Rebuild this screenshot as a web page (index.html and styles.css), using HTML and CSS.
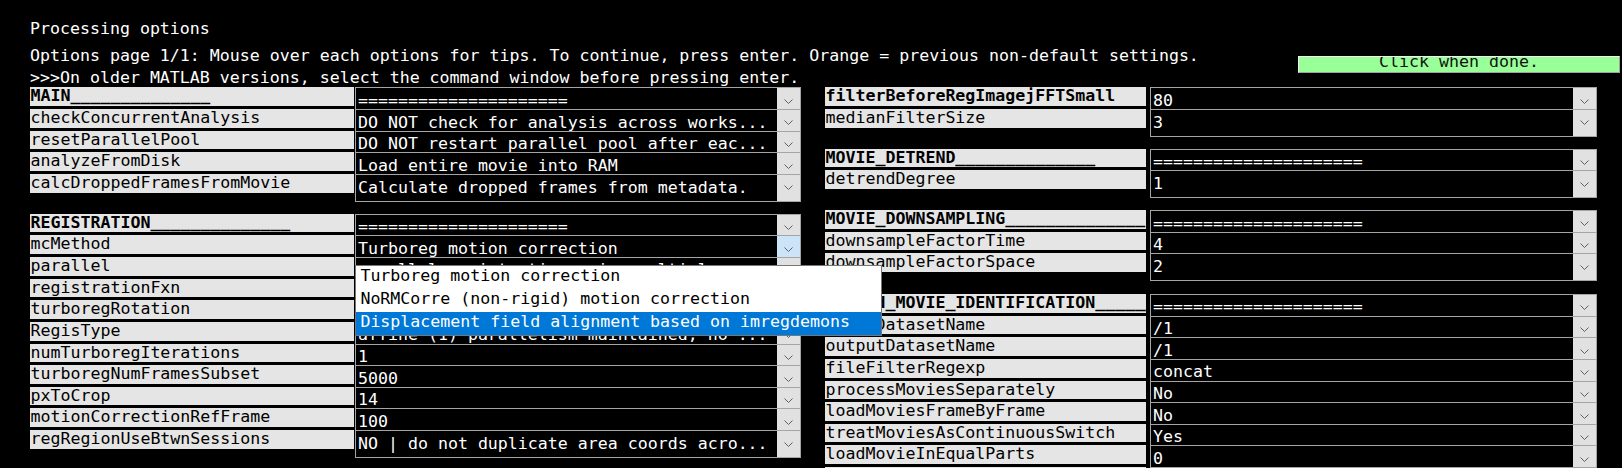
FILE: index.html
```html
<!DOCTYPE html>
<html>
<head>
<meta charset="utf-8">
<title>Processing options</title>
<link rel="stylesheet" href="styles.css">
</head>
<body>
<div class="top">
  <div class="msgs">
    <div class="title">Processing options</div>
    <div class="line l2">Options page 1/1: Mouse over each options for tips. To continue, press enter. Orange = previous non-default settings.</div>
    <div class="line l3">&gt;&gt;&gt;On older MATLAB versions, select the command window before pressing enter.</div>
  </div>
  <div class="done">Click when done.</div>
</div>
<div class="cols">
  <div class="col left">
    <div class="group">
      <div class="row"><div class="label hdr">MAIN______________</div><div class="val"><span class="vt">=====================</span><span class="arrow"><svg width="9" height="5" viewBox="0 0 9 5"><polyline points="0.5,0.5 4.5,4.5 8.5,0.5"/></svg></span></div></div>
      <div class="row"><div class="label">checkConcurrentAnalysis</div><div class="val"><span class="vt">DO NOT check for analysis across works...</span><span class="arrow"><svg width="9" height="5" viewBox="0 0 9 5"><polyline points="0.5,0.5 4.5,4.5 8.5,0.5"/></svg></span></div></div>
      <div class="row"><div class="label">resetParallelPool</div><div class="val"><span class="vt">DO NOT restart parallel pool after eac...</span><span class="arrow"><svg width="9" height="5" viewBox="0 0 9 5"><polyline points="0.5,0.5 4.5,4.5 8.5,0.5"/></svg></span></div></div>
      <div class="row"><div class="label">analyzeFromDisk</div><div class="val"><span class="vt">Load entire movie into RAM</span><span class="arrow"><svg width="9" height="5" viewBox="0 0 9 5"><polyline points="0.5,0.5 4.5,4.5 8.5,0.5"/></svg></span></div></div>
      <div class="row"><div class="label">calcDroppedFramesFromMovie</div><div class="val"><span class="vt">Calculate dropped frames from metadata.</span><span class="arrow"><svg width="9" height="5" viewBox="0 0 9 5"><polyline points="0.5,0.5 4.5,4.5 8.5,0.5"/></svg></span></div></div>
    </div>
    <div class="group">
      <div class="row"><div class="label hdr">REGISTRATION______________</div><div class="val"><span class="vt">=====================</span><span class="arrow"><svg width="9" height="5" viewBox="0 0 9 5"><polyline points="0.5,0.5 4.5,4.5 8.5,0.5"/></svg></span></div></div>
      <div class="row"><div class="label">mcMethod</div><div class="val open"><span class="vt">Turboreg motion correction</span><span class="arrow"><svg width="9" height="5" viewBox="0 0 9 5"><polyline points="0.5,0.5 4.5,4.5 8.5,0.5"/></svg></span>
        <div class="menu">
          <div class="mi">Turboreg motion correction</div>
          <div class="mi">NoRMCorre (non-rigid) motion correction</div>
          <div class="mi sel">Displacement field alignment based on imregdemons</div>
        </div>
      </div></div>
      <div class="row"><div class="label">parallel</div><div class="val"><span class="vt">parallel registration using multiple c...</span><span class="arrow"><svg width="9" height="5" viewBox="0 0 9 5"><polyline points="0.5,0.5 4.5,4.5 8.5,0.5"/></svg></span></div></div>
      <div class="row"><div class="label">registrationFxn</div><div class="val"><span class="vt">transfturboreg</span><span class="arrow"><svg width="9" height="5" viewBox="0 0 9 5"><polyline points="0.5,0.5 4.5,4.5 8.5,0.5"/></svg></span></div></div>
      <div class="row"><div class="label">turboregRotation</div><div class="val"><span class="vt">DO NOT use rotation correction</span><span class="arrow"><svg width="9" height="5" viewBox="0 0 9 5"><polyline points="0.5,0.5 4.5,4.5 8.5,0.5"/></svg></span></div></div>
      <div class="row"><div class="label">RegisType</div><div class="val"><span class="vt">affine (1) parallelism maintained, no ...</span><span class="arrow"><svg width="9" height="5" viewBox="0 0 9 5"><polyline points="0.5,0.5 4.5,4.5 8.5,0.5"/></svg></span></div></div>
      <div class="row"><div class="label">numTurboregIterations</div><div class="val"><span class="vt">1</span><span class="arrow"><svg width="9" height="5" viewBox="0 0 9 5"><polyline points="0.5,0.5 4.5,4.5 8.5,0.5"/></svg></span></div></div>
      <div class="row"><div class="label">turboregNumFramesSubset</div><div class="val"><span class="vt">5000</span><span class="arrow"><svg width="9" height="5" viewBox="0 0 9 5"><polyline points="0.5,0.5 4.5,4.5 8.5,0.5"/></svg></span></div></div>
      <div class="row"><div class="label">pxToCrop</div><div class="val"><span class="vt">14</span><span class="arrow"><svg width="9" height="5" viewBox="0 0 9 5"><polyline points="0.5,0.5 4.5,4.5 8.5,0.5"/></svg></span></div></div>
      <div class="row"><div class="label">motionCorrectionRefFrame</div><div class="val"><span class="vt">100</span><span class="arrow"><svg width="9" height="5" viewBox="0 0 9 5"><polyline points="0.5,0.5 4.5,4.5 8.5,0.5"/></svg></span></div></div>
      <div class="row"><div class="label">regRegionUseBtwnSessions</div><div class="val"><span class="vt">NO | do not duplicate area coords acro...</span><span class="arrow"><svg width="9" height="5" viewBox="0 0 9 5"><polyline points="0.5,0.5 4.5,4.5 8.5,0.5"/></svg></span></div></div>
    </div>
  </div>
  <div class="col right">
    <div class="group">
      <div class="row"><div class="label hdr">filterBeforeRegImagejFFTSmall</div><div class="val"><span class="vt">80</span><span class="arrow"><svg width="9" height="5" viewBox="0 0 9 5"><polyline points="0.5,0.5 4.5,4.5 8.5,0.5"/></svg></span></div></div>
      <div class="row"><div class="label">medianFilterSize</div><div class="val"><span class="vt">3</span><span class="arrow"><svg width="9" height="5" viewBox="0 0 9 5"><polyline points="0.5,0.5 4.5,4.5 8.5,0.5"/></svg></span></div></div>
    </div>
    <div class="group">
      <div class="row"><div class="label hdr">MOVIE_DETREND______________</div><div class="val"><span class="vt">=====================</span><span class="arrow"><svg width="9" height="5" viewBox="0 0 9 5"><polyline points="0.5,0.5 4.5,4.5 8.5,0.5"/></svg></span></div></div>
      <div class="row"><div class="label">detrendDegree</div><div class="val"><span class="vt">1</span><span class="arrow"><svg width="9" height="5" viewBox="0 0 9 5"><polyline points="0.5,0.5 4.5,4.5 8.5,0.5"/></svg></span></div></div>
    </div>
    <div class="group">
      <div class="row"><div class="label hdr">MOVIE_DOWNSAMPLING______________</div><div class="val"><span class="vt">=====================</span><span class="arrow"><svg width="9" height="5" viewBox="0 0 9 5"><polyline points="0.5,0.5 4.5,4.5 8.5,0.5"/></svg></span></div></div>
      <div class="row"><div class="label">downsampleFactorTime</div><div class="val"><span class="vt">4</span><span class="arrow"><svg width="9" height="5" viewBox="0 0 9 5"><polyline points="0.5,0.5 4.5,4.5 8.5,0.5"/></svg></span></div></div>
      <div class="row"><div class="label">downsampleFactorSpace</div><div class="val"><span class="vt">2</span><span class="arrow"><svg width="9" height="5" viewBox="0 0 9 5"><polyline points="0.5,0.5 4.5,4.5 8.5,0.5"/></svg></span></div></div>
    </div>
    <div class="group g-id">
      <div class="row"><div class="label hdr">Stored_MOVIE_IDENTIFICATION______________</div><div class="val"><span class="vt">=====================</span><span class="arrow"><svg width="9" height="5" viewBox="0 0 9 5"><polyline points="0.5,0.5 4.5,4.5 8.5,0.5"/></svg></span></div></div>
      <div class="row"><div class="label">inputDatasetName</div><div class="val"><span class="vt">/1</span><span class="arrow"><svg width="9" height="5" viewBox="0 0 9 5"><polyline points="0.5,0.5 4.5,4.5 8.5,0.5"/></svg></span></div></div>
      <div class="row"><div class="label">outputDatasetName</div><div class="val"><span class="vt">/1</span><span class="arrow"><svg width="9" height="5" viewBox="0 0 9 5"><polyline points="0.5,0.5 4.5,4.5 8.5,0.5"/></svg></span></div></div>
      <div class="row"><div class="label">fileFilterRegexp</div><div class="val"><span class="vt">concat</span><span class="arrow"><svg width="9" height="5" viewBox="0 0 9 5"><polyline points="0.5,0.5 4.5,4.5 8.5,0.5"/></svg></span></div></div>
      <div class="row"><div class="label">processMoviesSeparately</div><div class="val"><span class="vt">No</span><span class="arrow"><svg width="9" height="5" viewBox="0 0 9 5"><polyline points="0.5,0.5 4.5,4.5 8.5,0.5"/></svg></span></div></div>
      <div class="row"><div class="label">loadMoviesFrameByFrame</div><div class="val"><span class="vt">No</span><span class="arrow"><svg width="9" height="5" viewBox="0 0 9 5"><polyline points="0.5,0.5 4.5,4.5 8.5,0.5"/></svg></span></div></div>
      <div class="row"><div class="label">treatMoviesAsContinuousSwitch</div><div class="val"><span class="vt">Yes</span><span class="arrow"><svg width="9" height="5" viewBox="0 0 9 5"><polyline points="0.5,0.5 4.5,4.5 8.5,0.5"/></svg></span></div></div>
      <div class="row"><div class="label">loadMovieInEqualParts</div><div class="val"><span class="vt">0</span><span class="arrow"><svg width="9" height="5" viewBox="0 0 9 5"><polyline points="0.5,0.5 4.5,4.5 8.5,0.5"/></svg></span></div></div>
      <div class="row"><div class="label">loadSpecificImgFrames</div><div class="val"><span class="vt">[]</span><span class="arrow"><svg width="9" height="5" viewBox="0 0 9 5"><polyline points="0.5,0.5 4.5,4.5 8.5,0.5"/></svg></span></div></div>
    </div>
  </div>
</div>
</body>
</html>
```
FILE: styles.css
```css
html, body {
  margin: 0;
  background: #000;
  overflow: hidden;
}
body {
  width: 1622px;
  height: 468px;
  font-family: "DejaVu Sans Mono", "Liberation Mono", monospace;
  font-size: 16.6px;
  color: #fff;
}
.top {
  display: flex;
  justify-content: space-between;
  align-items: flex-start;
  padding: 19.25px 2px 0 30px;
}
.title, .line {
  line-height: 20px;
  white-space: nowrap;
}
.l2 { margin-top: 6.7px; }
.l3 { margin-top: 1.6px; }
.done {
  margin-top: 36.75px;
  width: 322px;
  height: 17px;
  box-sizing: border-box;
  border: 1px solid;
  border-color: #f0f0f0 #a0a0a0 #a0a0a0 #f0f0f0;
  background: #99ff99;
  color: #111;
  text-align: center;
  line-height: 10px;
  overflow: hidden;
  white-space: nowrap;
}
.cols {
  display: flex;
  gap: 24px;
  padding-left: 30px;
  margin-top: -0.25px;
}
.group + .group { margin-top: 18px; }
.group.g-id { margin-top: 19px; }
.row {
  display: flex;
  height: 21.67px;
}
.label {
  flex: none;
  height: 18.67px;
  box-sizing: border-box;
  padding-left: 0.5px;
  background: #e5e5e5;
  color: #000;
  line-height: 17px;
  white-space: nowrap;
  overflow: hidden;
}
.left .label { width: 324px; }
.right .label { width: 321px; }
.hdr { font-weight: bold; }
.val {
  flex: none;
  display: flex;
  width: 446px;
  height: 28px;
  box-sizing: border-box;
  border: 1px solid #a5a5a5;
  background: #000;
}
.left .val { margin-left: 1px; }
.right .val { margin-left: 4px; width: 447px; }
.vt {
  flex: 1;
  padding: 2.6px 0 0 2px;
  line-height: 19.3px;
  white-space: nowrap;
  overflow: hidden;
}
.arrow {
  flex: none;
  width: 23px;
  background: #e1e1e1;
  display: flex;
  align-items: center;
  justify-content: center;
}
.arrow svg polyline {
  fill: none;
  stroke: #606060;
  stroke-width: 1;
}
.open .arrow { background: #cce4f7; }
.menu {
  position: absolute;
  margin: 28.3px 0 0 -1px;
  width: 527px;
  box-sizing: border-box;
  border: 1px solid #767676;
  background: #fff;
  color: #000;
}
.mi {
  height: 23.3px;
  line-height: 20px;
  padding-left: 4.4px;
  white-space: nowrap;
}
.mi.sel {
  background: #0078d7;
  color: #fff;
}
```
